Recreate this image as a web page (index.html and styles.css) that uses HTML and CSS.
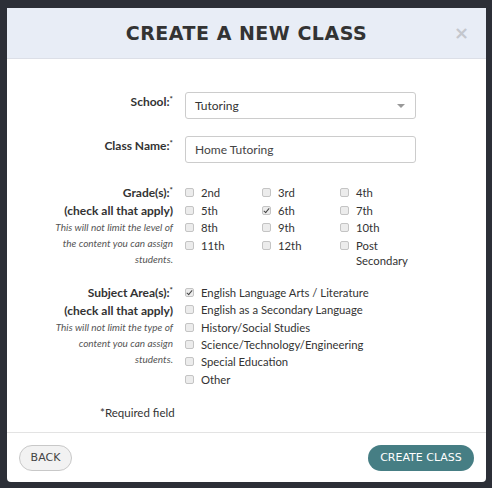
FILE: index.html
```html
<!DOCTYPE html>
<html lang="en">
<head>
    <meta charset="UTF-8">
    <meta name="viewport" content="width=device-width, initial-scale=1.0">
    <title>Create a New Class</title>
    <link rel="stylesheet" href="styles.css">
</head>
<body>

    <div class="modal">
        <header class="modal-header">
            <h1>Create a New Class</h1>
            <span class="close">&times;</span>
        </header>

        <section class="modal-body">
            <div class="form-row">
                <label class="field-label">School:<sup>*</sup></label>
                <div class="select-box">
                    <span>Tutoring</span>
                    <span class="caret"></span>
                </div>
            </div>

            <div class="form-row name-row">
                <label class="field-label">Class Name:<sup>*</sup></label>
                <input type="text" class="text-input" value="Home Tutoring">
            </div>

            <div class="form-row grades-row">
                <div class="field-label">
                    Grade(s):<sup>*</sup><br>
                    (check all that apply)
                    <p class="hint">This will not limit the level of the content you can assign students.</p>
                </div>
                <div class="grade-grid">
                    <label class="check"><input type="checkbox"> 2nd</label>
                    <label class="check"><input type="checkbox"> 3rd</label>
                    <label class="check"><input type="checkbox"> 4th</label>
                    <label class="check"><input type="checkbox"> 5th</label>
                    <label class="check"><input type="checkbox" checked> 6th</label>
                    <label class="check"><input type="checkbox"> 7th</label>
                    <label class="check"><input type="checkbox"> 8th</label>
                    <label class="check"><input type="checkbox"> 9th</label>
                    <label class="check"><input type="checkbox"> 10th</label>
                    <label class="check"><input type="checkbox"> 11th</label>
                    <label class="check"><input type="checkbox"> 12th</label>
                    <label class="check"><input type="checkbox"> <span>Post<br>Secondary</span></label>
                </div>
            </div>

            <div class="form-row subjects-row">
                <div class="field-label">
                    Subject Area(s):<sup>*</sup><br>
                    (check all that apply)
                    <p class="hint">This will not limit the type of content you can assign students.</p>
                </div>
                <div class="subject-list">
                    <label class="check"><input type="checkbox" checked> English Language Arts / Literature</label>
                    <label class="check"><input type="checkbox"> English as a Secondary Language</label>
                    <label class="check"><input type="checkbox"> History/Social Studies</label>
                    <label class="check"><input type="checkbox"> Science/Technology/Engineering</label>
                    <label class="check"><input type="checkbox"> Special Education</label>
                    <label class="check"><input type="checkbox"> Other</label>
                </div>
            </div>

            <p class="required">*Required field</p>
        </section>

        <footer class="modal-footer">
            <button class="btn btn-back">Back</button>
            <button class="btn btn-create">Create Class</button>
        </footer>
    </div>

</body>
</html>
```

FILE: styles.css
```css
/* Reset */
* {
    box-sizing: border-box;
    margin: 0;
    padding: 0;
}

body {
    font-family: Lato, "Open Sans", sans-serif;
    background-color: #2c2f37;
    color: #333;
    padding: 8px 6px 8px 7px;
}

/* Modal shell */
.modal {
    background-color: #fff;
    border-radius: 0 0 4px 4px;
    overflow: hidden;
}

.modal-header {
    position: relative;
    height: 51px;
    background-color: #e8edf6;
    border-bottom: 1px solid #dcdfe7;
    display: flex;
    align-items: center;
    justify-content: center;
}

.modal-header h1 {
    font-family: "DejaVu Sans", sans-serif;
    font-size: 19px;
    font-weight: bold;
    text-transform: uppercase;
    letter-spacing: 0.5px;
    color: #333;
}

.close {
    position: absolute;
    right: 17px;
    top: 14px;
    font-family: "DejaVu Sans", sans-serif;
    font-size: 18px;
    font-weight: bold;
    color: #c4c7cd;
}

/* Body */
.modal-body {
    padding: 33px 0 12px;
    border-bottom: 1px solid #e3e3e3;
}

.form-row {
    display: grid;
    grid-template-columns: 166px 231px;
    column-gap: 12px;
    align-items: start;
    margin-bottom: 17px;
}

.form-row.name-row {
    margin-bottom: 21px;
}

.form-row.grades-row {
    margin-bottom: 15px;
}

.field-label {
    text-align: right;
    font-size: 12px;
    font-weight: bold;
    line-height: 17.5px;
    color: #333;
    padding-top: 1px;
}

.grades-row .field-label,
.subjects-row .field-label {
    padding-top: 0;
}

.field-label sup {
    font-size: 8px;
    vertical-align: top;
    position: relative;
    top: -2px;
}

.hint {
    width: 124px;
    margin-left: auto;
    font-size: 10px;
    font-style: italic;
    font-weight: normal;
    color: #555;
    line-height: 16px;
}

.select-box,
.text-input {
    height: 27px;
    border: 1px solid #ccc;
    border-radius: 3px;
    font-family: Lato, sans-serif;
    font-size: 12px;
    color: #333;
    padding: 0 9px;
    background-color: #fff;
}

.select-box {
    display: flex;
    align-items: center;
    justify-content: space-between;
}

.caret {
    width: 0;
    height: 0;
    border-left: 4px solid transparent;
    border-right: 4px solid transparent;
    border-top: 4px solid #999;
    margin-right: 1px;
}

.text-input {
    width: 100%;
    color: #444;
    outline: none;
}

/* Checkboxes */
.grade-grid {
    display: grid;
    grid-template-columns: 77px 78px 76px;
}

.subject-list {
    display: flex;
    flex-direction: column;
}

.check {
    display: flex;
    align-items: flex-start;
    gap: 7px;
    padding: 1.25px 0;
    font-size: 11.3px;
    line-height: 15px;
    color: #333;
}

.subject-list .check {
    padding: 1.15px 0;
}

.check input {
    appearance: none;
    -webkit-appearance: none;
    flex-shrink: 0;
    width: 9px;
    height: 9px;
    margin-top: 3px;
    border: 1px solid #c4c4c4;
    border-radius: 2px;
    background-color: #ececec;
    position: relative;
}

.check input:checked::after {
    content: "";
    position: absolute;
    left: 2px;
    top: 0;
    width: 2px;
    height: 5px;
    border: solid #444;
    border-width: 0 1.5px 1.5px 0;
    transform: rotate(40deg);
}

.required {
    font-size: 11.5px;
    line-height: 15px;
    color: #333;
    padding-left: 93px;
    margin-top: 14px;
}

/* Footer */
.modal-footer {
    display: flex;
    justify-content: space-between;
    align-items: center;
    padding: 12px 12px 11px;
}

.btn {
    height: 26px;
    border-radius: 13px;
    font-family: "DejaVu Sans", sans-serif;
    font-size: 11px;
    text-transform: uppercase;
    cursor: pointer;
}

.btn-back {
    width: 53px;
    background-color: #f2f2f2;
    border: 1px solid #c8c8c8;
    color: #444;
}

.btn-create {
    width: 106px;
    background-color: #467e84;
    border: none;
    color: #fff;
}
```
